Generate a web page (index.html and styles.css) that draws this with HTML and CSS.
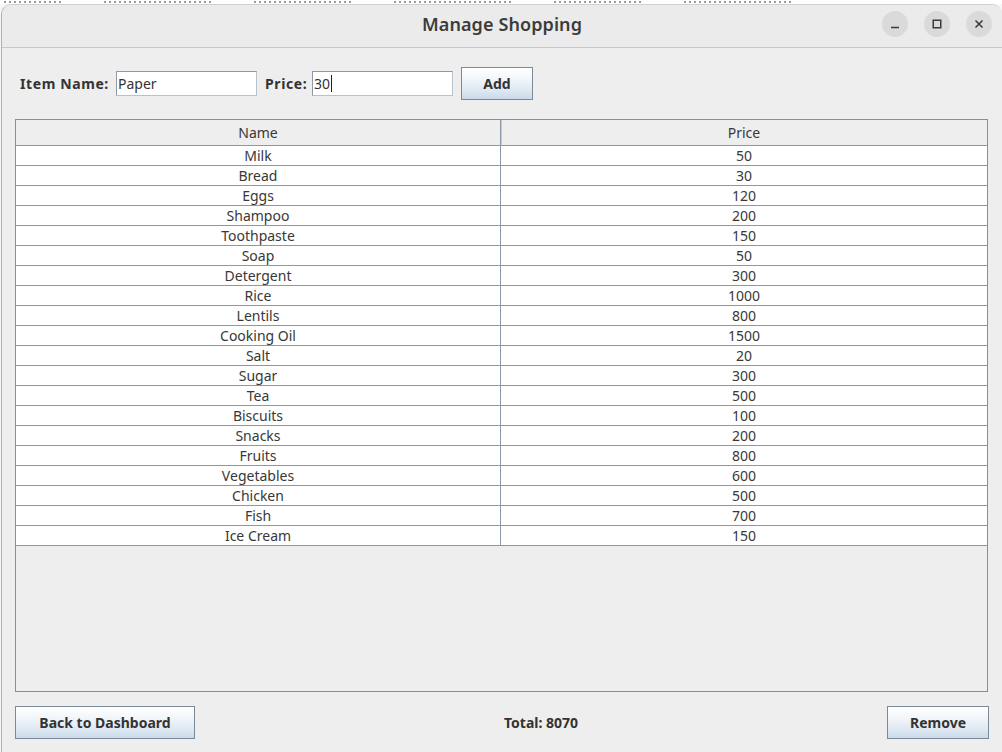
FILE: index.html
```html
<!DOCTYPE html>
<html>
<head>
<meta charset="utf-8">
<link rel="stylesheet" href="styles.css">
</head>
<body>
<div class="desk"><i class="m w1"></i><i class="m w2"></i><i class="m w3"></i><i class="m w4"></i><i class="m w5"></i><i class="m w6"></i></div>
<div class="window">
  <div class="titlebar">
    <div class="title">Manage Shopping</div>
    <div class="controls">
      <span class="ctl"><svg width="26" height="26" viewBox="0 0 26 26"><line x1="9" y1="16.5" x2="17" y2="16.5" stroke="#3a3a3a" stroke-width="1.5"/></svg></span>
      <span class="ctl"><svg width="26" height="26" viewBox="0 0 26 26"><rect x="9.25" y="9.25" width="7.5" height="7.5" fill="none" stroke="#3a3a3a" stroke-width="1.5"/></svg></span>
      <span class="ctl"><svg width="26" height="26" viewBox="0 0 26 26"><path d="M9.5 9.5 L16.5 16.5 M16.5 9.5 L9.5 16.5" stroke="#3a3a3a" stroke-width="1.5"/></svg></span>
    </div>
  </div>
  <div class="content">
    <div class="toolbar">
      <label class="lbl l1">Item Name:</label>
      <div class="field">Paper</div>
      <label class="lbl l2">Price:</label>
      <div class="field">30<span class="caret"></span></div>
      <button class="btn add">Add</button>
    </div>
    <div class="pane">
      <div class="row head"><div class="cell">Name</div><div class="cell">Price</div></div>
      <div class="row"><div class="cell">Milk</div><div class="cell">50</div></div>
      <div class="row"><div class="cell">Bread</div><div class="cell">30</div></div>
      <div class="row"><div class="cell">Eggs</div><div class="cell">120</div></div>
      <div class="row"><div class="cell">Shampoo</div><div class="cell">200</div></div>
      <div class="row"><div class="cell">Toothpaste</div><div class="cell">150</div></div>
      <div class="row"><div class="cell">Soap</div><div class="cell">50</div></div>
      <div class="row"><div class="cell">Detergent</div><div class="cell">300</div></div>
      <div class="row"><div class="cell">Rice</div><div class="cell">1000</div></div>
      <div class="row"><div class="cell">Lentils</div><div class="cell">800</div></div>
      <div class="row"><div class="cell">Cooking Oil</div><div class="cell">1500</div></div>
      <div class="row"><div class="cell">Salt</div><div class="cell">20</div></div>
      <div class="row"><div class="cell">Sugar</div><div class="cell">300</div></div>
      <div class="row"><div class="cell">Tea</div><div class="cell">500</div></div>
      <div class="row"><div class="cell">Biscuits</div><div class="cell">100</div></div>
      <div class="row"><div class="cell">Snacks</div><div class="cell">200</div></div>
      <div class="row"><div class="cell">Fruits</div><div class="cell">800</div></div>
      <div class="row"><div class="cell">Vegetables</div><div class="cell">600</div></div>
      <div class="row"><div class="cell">Chicken</div><div class="cell">500</div></div>
      <div class="row"><div class="cell">Fish</div><div class="cell">700</div></div>
      <div class="row"><div class="cell">Ice Cream</div><div class="cell">150</div></div>
    </div>
    <div class="footer">
      <button class="btn back">Back to Dashboard</button>
      <div class="total">Total: 8070</div>
      <button class="btn remove">Remove</button>
    </div>
  </div>
</div>
</body>
</html>
```
FILE: styles.css
```css
* { box-sizing: border-box; }
html, body { margin: 0; padding: 0; }
body {
  width: 1002px;
  height: 752px;
  overflow: hidden;
  background: #f6f6f6;
  font-family: "Noto Sans", "DejaVu Sans", sans-serif;
  color: #333333;
}
.desk {
  height: 4px;
  overflow: hidden;
  display: flex;
  gap: 40px;
  padding-left: 4px;
  background: #ffffff;
}
.m {
  display: block;
  height: 2px;
  margin-top: 1px;
  background: repeating-linear-gradient(to right, #999 0 2px, transparent 2px 5px);
}
.w1 { width: 60px; }
.w2 { width: 110px; }
.w3 { width: 100px; }
.w4 { width: 120px; }
.w5 { width: 90px; }
.w6 { width: 110px; }
.window {
  margin-left: 1px;
  height: 748px;
  border-left: 1px solid #b0b0b0;
  border-top: 1px solid #d0d0d0;
  border-radius: 10px 10px 0 0;
  background: #eeeeee;
  overflow: hidden;
}
.titlebar {
  height: 43px;
  background: #ebebeb;
  border-bottom: 1px solid #c8c8c8;
  display: flex;
  align-items: center;
  justify-content: center;
  padding-bottom: 5px;
  position: relative;
}
.title {
  font-size: 18px;
  font-weight: 600;
  color: #3c3c3c;
  letter-spacing: 0.1px;
}
.controls {
  position: absolute;
  right: 10px;
  top: 6px;
  display: flex;
  gap: 16px;
}
.ctl {
  width: 26px;
  height: 26px;
  border-radius: 50%;
  background: #dadada;
  display: block;
}
.ctl svg { display: block; }
.content {
  padding: 19px 14px 0 13px;
}
.toolbar {
  display: flex;
  align-items: center;
  height: 33px;
  padding-left: 5px;
}
.lbl {
  font-size: 14px;
  font-weight: 700;
  color: #333;
  letter-spacing: 0.6px;
}
.l1 { width: 96px; }
.l2 { width: 47px; margin-left: 8px; }
.field {
  width: 141px;
  height: 25px;
  background: #ffffff;
  border: 1px solid #8c99a8;
  border-right-color: #b8c2cc;
  border-bottom-color: #b8c2cc;
  font-size: 14px;
  line-height: 23px;
  padding-left: 1px;
  color: #333;
  display: flex;
  align-items: center;
}
.caret {
  display: inline-block;
  width: 1px;
  height: 17px;
  background: #222;
  margin-left: 1px;
}
.btn {
  font-family: "Noto Sans", "DejaVu Sans", sans-serif;
  font-size: 14px;
  font-weight: 700;
  color: #333;
  height: 33px;
  border: 1px solid #7a8a99;
  background: linear-gradient(to bottom, #ffffff 0%, #f2f6fa 35%, #dce7f2 75%, #c9daea 100%);
  padding: 0;
  border-radius: 0;
}
.add { width: 72px; margin-left: 8px; }
.pane {
  margin-top: 19px;
  height: 573px;
  border: 1px solid #8190a0;
  background: #eeeeee;
}
.row {
  display: grid;
  grid-template-columns: 485px 1fr;
  height: 20px;
  background: #ffffff;
  border-bottom: 1px solid #8a98a8;
}
.row.head {
  height: 26px;
  background: #eeeeee;
  border-bottom: 1px solid #8a98a8;
}
.cell {
  font-size: 14px;
  line-height: 19px;
  text-align: center;
  color: #383838;
}
.head .cell { line-height: 25px; }
.cell:first-child { border-right: 1px solid #8a98a8; }
.head .cell:first-child { box-shadow: 1px 0 0 #c5cdd5; }
.footer {
  display: grid;
  grid-template-columns: 180px 1fr 102px;
  align-items: center;
  margin-top: 14px;
  margin-right: -1px;
}
.back { width: 180px; }
.remove { width: 102px; }
.total {
  font-size: 14px;
  font-weight: 700;
  color: #333;
  text-align: center;
}
```
